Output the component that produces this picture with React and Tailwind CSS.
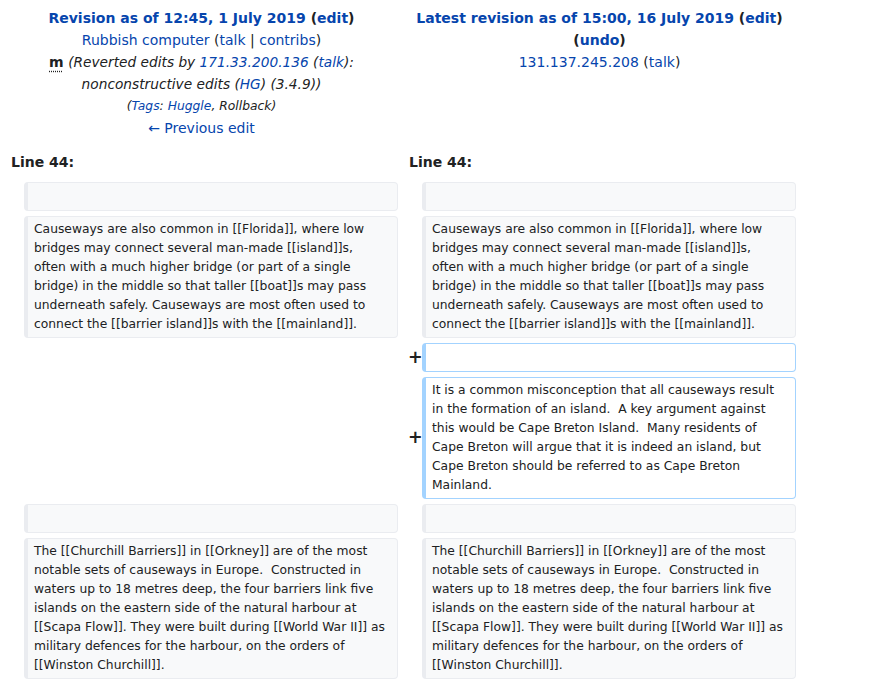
import React from "react";

const A = ({ children }) => <span className="text-[#0645ad]">{children}</span>;

const ctx = "bg-[#f8f9fa] border border-[#eaecf0] border-l-4 rounded-[4px] pl-[6px] pr-[10px] py-[3px] min-h-[29px] whitespace-pre-wrap";
const add = "bg-white border border-[#a3d3ff] border-l-4 rounded-[4px] pl-[6px] pr-[10px] py-[3px] min-h-[29px] whitespace-pre-wrap";

function Marker() {
  return (
    <div className="flex items-center">
      <span className="ml-[5px] text-[17.5px] font-bold leading-none text-[#202122]">+</span>
    </div>
  );
}

export default function App() {
  const p1 =
    "Causeways are also common in [[Florida]], where low bridges may connect several man-made [[island]]s, often with a much higher bridge (or part of a single bridge) in the middle so that taller [[boat]]s may pass underneath safely. Causeways are most often used to connect the [[barrier island]]s with the [[mainland]].";
  const p2 =
    "It is a common misconception that all causeways result in the formation of an island.  A key argument against this would be Cape Breton Island.  Many residents of Cape Breton will argue that it is indeed an island, but Cape Breton should be referred to as Cape Breton Mainland.";
  const p3 =
    "The [[Churchill Barriers]] in [[Orkney]] are of the most notable sets of causeways in Europe.  Constructed in waters up to 18 metres deep, the four barriers link five islands on the eastern side of the natural harbour at [[Scapa Flow]]. They were built during [[World War II]] as military defences for the harbour, on the orders of [[Winston Churchill]].";

  return (
    <div className="min-h-[685px] w-[874px] bg-white text-[#202122]" style={{ fontFamily: "'DejaVu Sans', sans-serif" }}>
      {/* header */}
      <div className="grid grid-cols-[393px_393px] gap-x-[5px] px-[5px] pt-[7px] text-[14px] leading-[22px] text-center">
        <div>
          <div className="font-bold">
            <A>Revision as of 12:45, 1 July 2019</A> (<A>edit</A>)
          </div>
          <div>
            <A>Rubbish computer</A> (<A>talk</A> | <A>contribs</A>)
          </div>
          <div>
            <span className="font-bold underline decoration-dotted underline-offset-[4px]">m</span>{" "}
            <span className="italic text-[13.72px]">
              (Reverted edits by <A>171.33.200.136</A> (<A>talk</A>):
              <br />
              nonconstructive edits (<A>HG</A>) (3.4.9))
            </span>
          </div>
          <div className="italic text-[12.32px]">
            (<A>Tags</A>: <A>Huggle</A>, Rollback)
          </div>
          <div>
            <A>← Previous edit</A>
          </div>
        </div>
        <div>
          <div className="font-bold">
            <A>Latest revision as of 15:00, 16 July 2019</A> (<A>edit</A>)
            <br />(<A>undo</A>)
          </div>
          <div>
            <A>131.137.245.208</A> (<A>talk</A>)
          </div>
        </div>
      </div>

      {/* line numbers */}
      <div className="mt-[12px] grid grid-cols-[393px_393px] gap-x-[5px] px-[5px] text-[14px] leading-[22px] font-bold">
        <div className="pl-[6px]">Line 44:</div>
        <div className="pl-[6px]">Line 44:</div>
      </div>

      {/* diff rows */}
      <div className="mt-[9px] grid grid-cols-[14px_374px_14px_374px] gap-x-[5px] gap-y-[5px] px-[5px] text-[12.32px] leading-[19px]">
        <div />
        <div className={ctx}></div>
        <div />
        <div className={ctx}></div>

        <div />
        <div className={ctx}>{p1}</div>
        <div />
        <div className={ctx}>{p1}</div>

        <div className="col-span-2" />
        <Marker />
        <div className={add}></div>

        <div className="col-span-2" />
        <Marker />
        <div className={add}>{p2}</div>

        <div />
        <div className={ctx}></div>
        <div />
        <div className={ctx}></div>

        <div />
        <div className={ctx}>{p3}</div>
        <div />
        <div className={ctx}>{p3}</div>
      </div>
    </div>
  );
}
